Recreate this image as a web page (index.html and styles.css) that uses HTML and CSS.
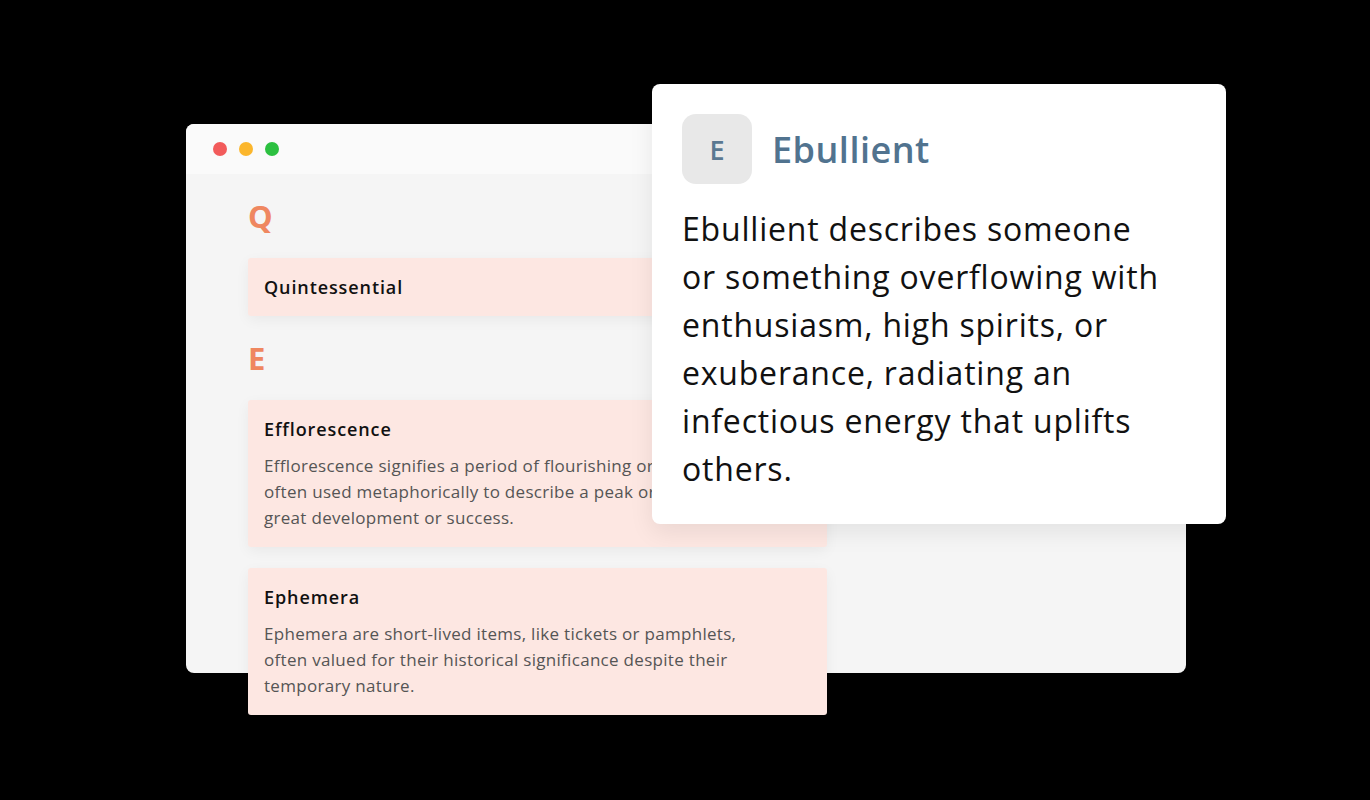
FILE: index.html
```html
<!DOCTYPE html>
<html lang="en">
<head>
    <meta charset="UTF-8">
    <meta name="viewport" content="width=device-width, initial-scale=1.0">
    <title>Glossary - Word Popup</title>
    <link rel="stylesheet" href="styles.css">
</head>
<body>
    <div class="stage">
        <div class="browser-window">
            <div class="title-bar">
                <span class="dot dot-red"></span>
                <span class="dot dot-yellow"></span>
                <span class="dot dot-green"></span>
            </div>
            <div class="glossary">
                <h2 class="letter">Q</h2>
                <div class="term-card">
                    <h3 class="term-title">Quintessential</h3>
                </div>

                <h2 class="letter">E</h2>
                <div class="term-card">
                    <h3 class="term-title">Efflorescence</h3>
                    <p class="term-text">Efflorescence signifies a period of flourishing or blooming, often used metaphorically to describe a peak or period of great development or success.</p>
                </div>
                <div class="term-card">
                    <h3 class="term-title">Ephemera</h3>
                    <p class="term-text">Ephemera are short-lived items, like tickets or pamphlets, often valued for their historical significance despite their temporary nature.</p>
                </div>
            </div>
        </div>

        <div class="term-popup">
            <div class="popup-head">
                <div class="popup-badge">E</div>
                <h2 class="popup-title">Ebullient</h2>
            </div>
            <p class="popup-text">Ebullient describes someone or something overflowing with enthusiasm, high spirits, or exuberance, radiating an infectious energy that uplifts others.</p>
        </div>
    </div>
</body>
</html>
```

FILE: styles.css
```css
body {
    font-family: "Open Sans", "DejaVu Sans", sans-serif;
    background-color: #000;
    margin: 0;
    padding: 0;
}
.stage {
    position: relative;
    width: 1370px;
    height: 800px;
    overflow: hidden;
    padding-top: 124px;
    box-sizing: border-box;
}
.browser-window {
    width: 1000px;
    height: 549px;
    margin-left: 186px;
    background-color: #f5f5f5;
    border-radius: 8px;
}
.title-bar {
    height: 50px;
    background-color: #fafafa;
    border-radius: 8px 8px 0 0;
    display: flex;
    align-items: center;
    gap: 12px;
    padding-left: 27px;
}
.dot {
    width: 14px;
    height: 14px;
    border-radius: 50%;
}
.dot-red {
    background-color: #f25b5b;
}
.dot-yellow {
    background-color: #fbb62c;
}
.dot-green {
    background-color: #2cc040;
}
.glossary {
    width: 579px;
    margin-left: 62px;
    padding-top: 21px;
    display: flex;
    flex-direction: column;
    gap: 21px;
}
.letter {
    margin: 0;
    font-size: 31px;
    line-height: 42px;
    font-weight: 700;
    color: #ef8760;
}
.term-card {
    background-color: #fde7e2;
    border-radius: 3px;
    padding: 16px;
    box-shadow: 0 4px 14px rgba(0, 0, 0, 0.05);
}
.term-title {
    margin: 0;
    font-size: 18px;
    line-height: 26px;
    font-weight: 600;
    letter-spacing: 0.9px;
    color: #111;
}
.term-text {
    margin: 11px 0 0;
    max-width: 500px;
    font-size: 17px;
    line-height: 26px;
    letter-spacing: 0.3px;
    color: #555;
}
.term-popup {
    position: absolute;
    left: 652px;
    top: 84px;
    width: 574px;
    box-sizing: border-box;
    padding: 30px 30px 31px;
    background-color: #fff;
    border-radius: 8px;
    box-shadow: 0 8px 24px rgba(0, 0, 0, 0.08);
}
.popup-head {
    display: flex;
    align-items: center;
    gap: 20px;
}
.popup-badge {
    width: 70px;
    height: 70px;
    border-radius: 14px;
    background-color: #e8e8e8;
    color: #5a7891;
    font-size: 27px;
    font-weight: 600;
    display: flex;
    align-items: center;
    justify-content: center;
}
.popup-title {
    margin: 0;
    font-size: 36px;
    font-weight: 600;
    letter-spacing: 0.5px;
    color: #51738f;
}
.popup-text {
    margin: 21px 0 0;
    max-width: 485px;
    font-size: 32px;
    line-height: 48px;
    letter-spacing: 0.8px;
    color: #111;
}
```
